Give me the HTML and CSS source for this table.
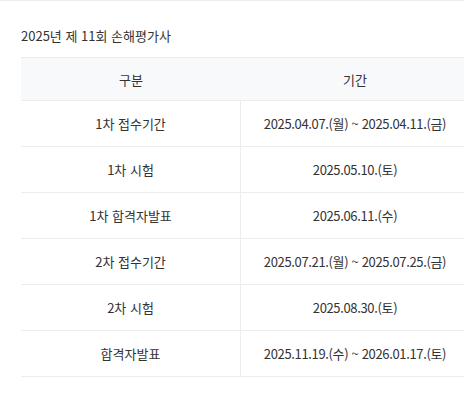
FILE: index.html
```html
<!DOCTYPE html>
<html lang="ko">
<head>
<meta charset="utf-8">
<link rel="stylesheet" href="styles.css">
</head>
<body>
<div class="page">
  <h2 class="title">2025년 제 11회 손해평가사</h2>
  <table class="schedule">
    <thead>
      <tr><th class="c1">구분</th><th class="c2">기간</th></tr>
    </thead>
    <tbody>
      <tr><td class="c1">1차 접수기간</td><td class="c2">2025.04.07.(월) ~ 2025.04.11.(금)</td></tr>
      <tr><td class="c1">1차 시험</td><td class="c2">2025.05.10.(토)</td></tr>
      <tr><td class="c1">1차 합격자발표</td><td class="c2">2025.06.11.(수)</td></tr>
      <tr><td class="c1">2차 접수기간</td><td class="c2">2025.07.21.(월) ~ 2025.07.25.(금)</td></tr>
      <tr><td class="c1">2차 시험</td><td class="c2">2025.08.30.(토)</td></tr>
      <tr><td class="c1">합격자발표</td><td class="c2">2025.11.19.(수) ~ 2026.01.17.(토)</td></tr>
    </tbody>
  </table>
</div>
</body>
</html>
```

FILE: styles.css
```css
html, body {
  margin: 0;
  padding: 0;
  background: #fff;
  overflow: hidden;
}
body {
  font-family: "Noto Sans CJK KR", "Noto Sans", sans-serif;
  color: #333;
  font-size: 13px;
}
.page {
  border-top: 1px solid #ececec;
  padding-left: 21px;
  width: 600px;
}
.title {
  margin: 25px 0 0 0;
  font-size: 13px;
  font-weight: normal;
  line-height: 20px;
  color: #333;
}
.schedule {
  margin-top: 11px;
  border-collapse: separate;
  border-spacing: 0;
  width: 448px;
  table-layout: fixed;
}
.schedule th {
  background: #f8f9fb;
  font-weight: normal;
  height: 42px;
  padding: 0;
  border-top: 1px solid #ececec;
  border-bottom: 1px solid #ececec;
  text-align: center;
  vertical-align: middle;
}
.schedule td {
  height: 45px;
  padding: 0;
  border-bottom: 1px solid #ececec;
  text-align: center;
  vertical-align: middle;
  white-space: nowrap;
}
.schedule .c1 {
  width: 220px;
}
.schedule td.c1 {
  border-right: 1px solid #ececec;
}
.schedule td.c2 {
  letter-spacing: -0.35px;
}
```
